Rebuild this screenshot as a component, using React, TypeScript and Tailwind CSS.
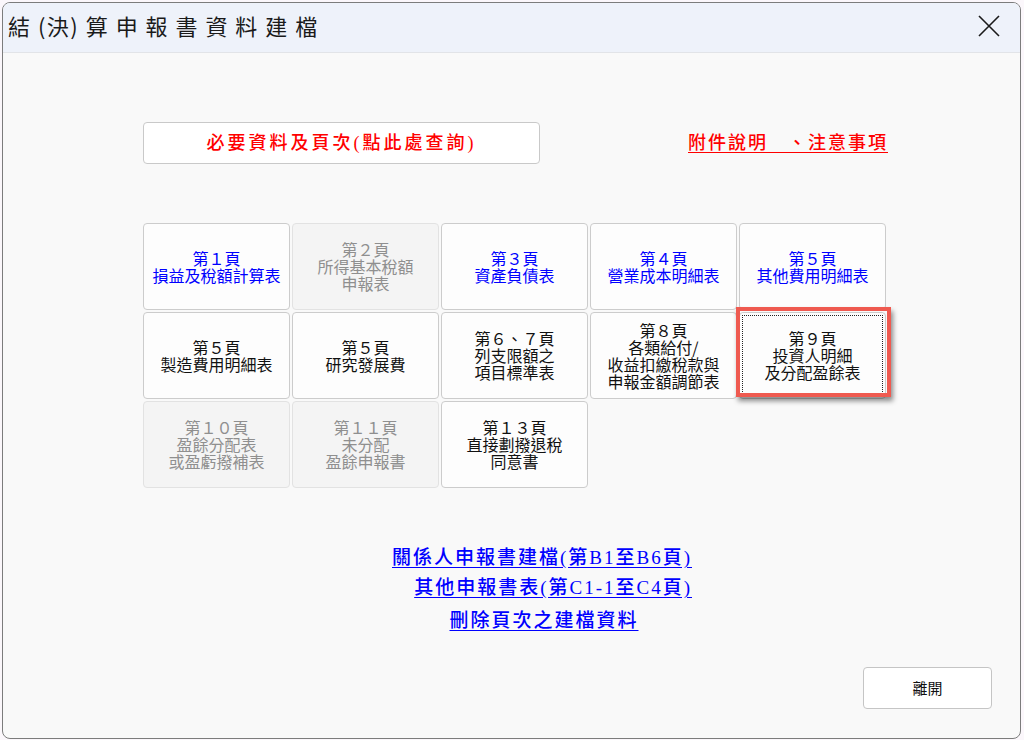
import React from 'react';

type Cell = {
  lines: string[];
  tone: 'blue' | 'black' | 'off';
  focused?: boolean;
};

const cells: (Cell | null)[] = [
  { lines: ['第１頁', '損益及稅額計算表'], tone: 'blue' },
  { lines: ['第２頁', '所得基本稅額', '申報表'], tone: 'off' },
  { lines: ['第３頁', '資產負債表'], tone: 'blue' },
  { lines: ['第４頁', '營業成本明細表'], tone: 'blue' },
  { lines: ['第５頁', '其他費用明細表'], tone: 'blue' },
  { lines: ['第５頁', '製造費用明細表'], tone: 'black' },
  { lines: ['第５頁', '研究發展費'], tone: 'black' },
  { lines: ['第６、７頁', '列支限額之', '項目標準表'], tone: 'black' },
  { lines: ['第８頁', '各類給付/', '收益扣繳稅款與', '申報金額調節表'], tone: 'black' },
  { lines: ['第９頁', '投資人明細', '及分配盈餘表'], tone: 'black', focused: true },
  { lines: ['第１０頁', '盈餘分配表', '或盈虧撥補表'], tone: 'off' },
  { lines: ['第１１頁', '未分配', '盈餘申報書'], tone: 'off' },
  { lines: ['第１３頁', '直接劃撥退稅', '同意書'], tone: 'black' },
];

function PageCell({ cell }: { cell: Cell }) {
  const tone =
    cell.tone === 'blue'
      ? 'text-[#0000ff] bg-[#fdfdfd] border-[#cccccc]'
      : cell.tone === 'black'
        ? 'text-[#111111] bg-[#fdfdfd] border-[#cccccc]'
        : 'text-[#8f8f8f] bg-[#f4f4f4] border-[#e2e2e2]';
  return (
    <div
      className={`relative h-[87px] rounded-[4px] border flex flex-col items-center justify-center text-[16px] leading-[17px] ${tone} ${
        cell.focused ? 'border-[#3c5a7c]' : ''
      }`}
    >
      {cell.lines.map((l, i) => (
        <span key={i}>{l}</span>
      ))}
      {cell.focused && (
        <>
          <div className="absolute inset-[2px] border border-dotted border-[#222222]" />
          <div className="absolute left-[-4px] top-[-6px] w-[155px] h-[90px] border-[4px] border-[#ef5a50] shadow-[2px_4px_5px_rgba(0,0,0,0.45)]" />
        </>
      )}
    </div>
  );
}

export default function App() {
  return (
    <div className="w-[1024px] h-[740px] bg-[#fbf7fb] pt-[2px] pl-[2px] font-['Noto_Sans_CJK_TC','Noto_Sans',sans-serif]">
      <div className="w-[1019px] h-[737px] border border-[#7c7c7c] rounded-[8px] overflow-hidden flex flex-col bg-[#f9f9f9]">
        <div className="h-[50px] shrink-0 bg-[#eef2fa] border-b border-[#e2e4e8] flex items-center justify-between pl-[5px] pr-[20px] pb-[5px]">
          <span className="text-[22px] text-[#1a1a1a] tracking-[1.5px]">結 (決) 算 申 報 書 資 料 建 檔</span>
          <svg width="22" height="22" viewBox="0 0 22 22" className="mt-[1px]">
            <path d="M1 1 L21 21 M21 1 L1 21" stroke="#1a1a1a" strokeWidth="1.6" />
          </svg>
        </div>

        <div className="flex-1 flex flex-col pl-[140px] pt-[69px]">
          <div className="flex items-center h-[42px]">
            <button className="w-[397px] h-[42px] bg-white border border-[#c9c9c9] rounded-[4px] text-[#ff0000] text-[18px] font-medium tracking-[3px] font-['Liberation_Serif','Noto_Sans_CJK_TC',serif]">
              必要資料及頁次(點此處查詢)
            </button>
            <span className="ml-[148px] text-[#ff0000] text-[18px] font-medium tracking-[2px] underline underline-offset-[3px] font-['Liberation_Serif','Noto_Sans_CJK_TC',serif]">
              附件說明　、注意事項
            </span>
          </div>

          <div className="mt-[59px] grid grid-cols-[repeat(5,147px)] gap-[2px]">
            {cells.map((c, i) => (c ? <PageCell key={i} cell={c} /> : <div key={i} />))}
          </div>

          <div className="mt-[55px] ml-[239px] w-[310px] flex flex-col items-end text-[#0000ff] text-[19px] font-medium tracking-[2px] font-['Liberation_Serif','Noto_Sans_CJK_TC',serif]">
            <span className="leading-[30px] underline underline-offset-[3px]">關係人申報書建檔(第B1至B6頁)</span>
            <span className="leading-[30px] underline underline-offset-[3px]">其他申報書表(第C1-1至C4頁)</span>
            <span className="mt-[3px] ml-[14px] self-center leading-[30px] underline underline-offset-[3px]">刪除頁次之建檔資料</span>
          </div>

          <div className="mt-[31px] flex justify-end pr-[28px]">
            <button className="w-[129px] h-[42px] bg-white border border-[#c5c5c5] rounded-[4px] text-[15px] text-[#111111]">
              離開
            </button>
          </div>
        </div>
      </div>
    </div>
  );
}
